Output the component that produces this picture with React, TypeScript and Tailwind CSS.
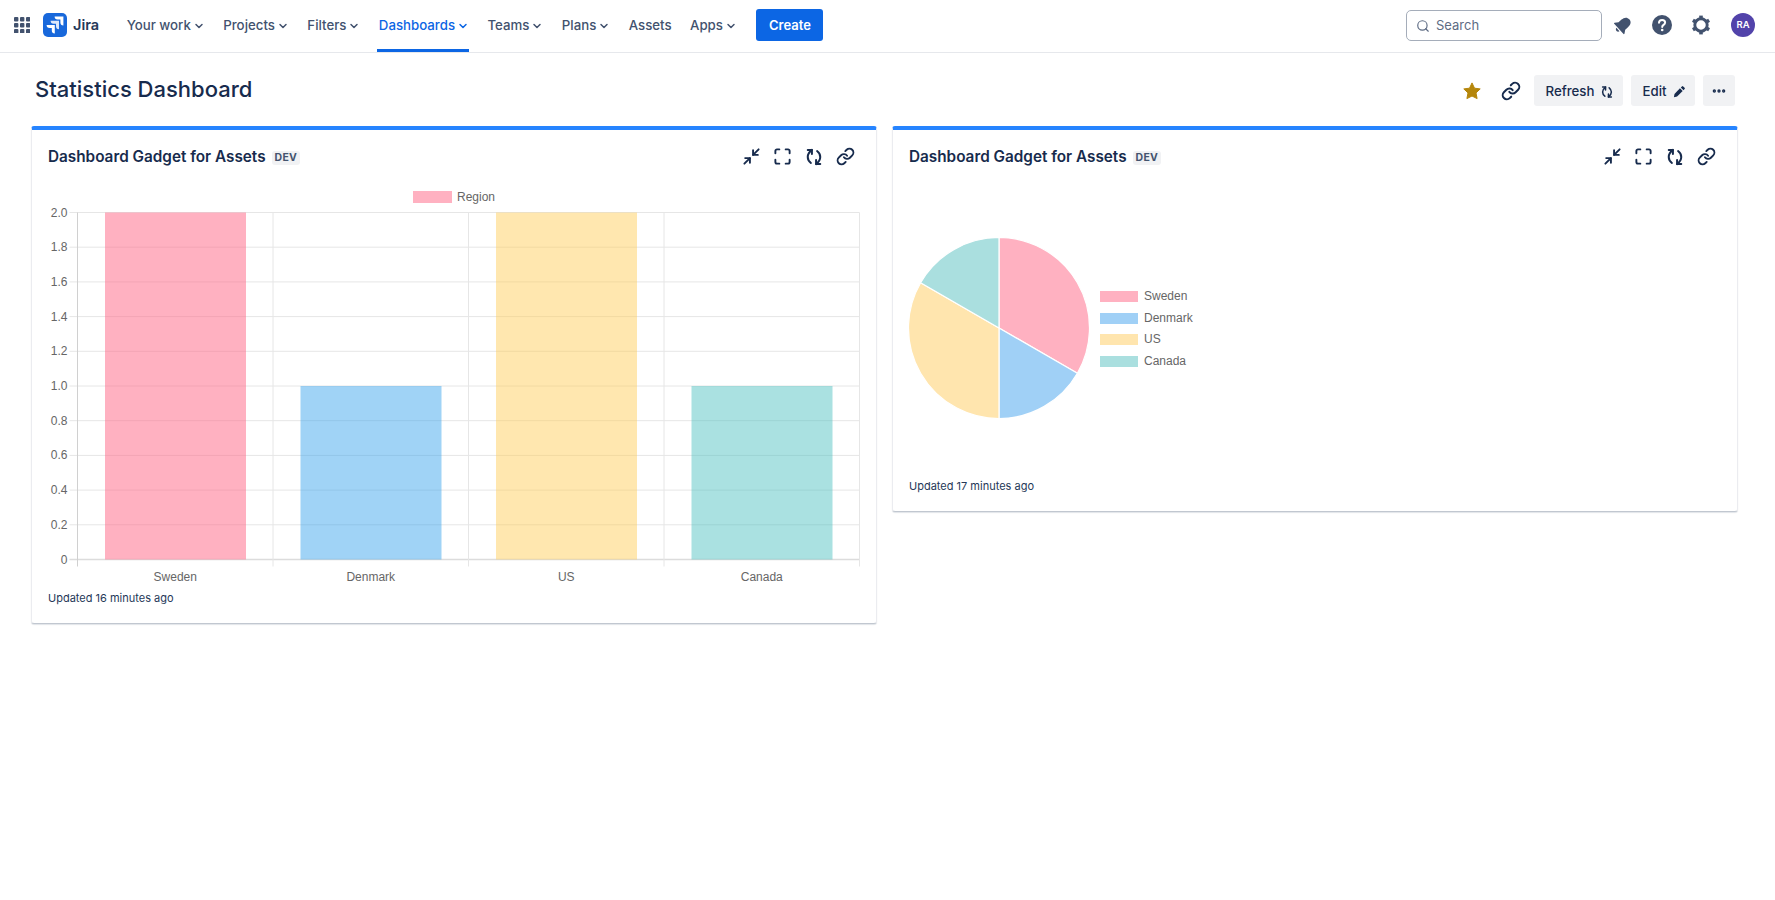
import { ChevronDown, Link, Maximize, Minimize2, MoreHorizontal, Search } from "lucide-react";

const NAV = [
  { label: "Your work", caret: true },
  { label: "Projects", caret: true },
  { label: "Filters", caret: true },
  { label: "Dashboards", caret: true, active: true },
  { label: "Teams", caret: true },
  { label: "Plans", caret: true },
  { label: "Assets", caret: false },
  { label: "Apps", caret: true },
];

const DATA = [
  { name: "Sweden", value: 2, color: "#ffb1c1", bar: "rgba(255,99,132,0.5)" },
  { name: "Denmark", value: 1, color: "#a0d0f6", bar: "rgba(54,162,235,0.47)" },
  { name: "US", value: 2, color: "#ffe5ae", bar: "rgba(255,205,86,0.47)" },
  { name: "Canada", value: 1, color: "#aadfdf", bar: "rgba(75,192,192,0.47)" },
];

function AppGrid() {
  const dots = [];
  for (let r = 0; r < 3; r++) {
    for (let c = 0; c < 3; c++) {
      dots.push(<rect key={`${r}-${c}`} x={c * 6} y={r * 6} width="4.4" height="4.4" rx="1" fill="#42526e" />);
    }
  }
  return (
    <svg width="16.4" height="16.4" viewBox="0 0 16.4 16.4">
      {dots}
    </svg>
  );
}

function JiraLogo() {
  return (
    <svg width="24" height="24" viewBox="0 0 24 24">
      <rect width="24" height="24" rx="5" fill="#1868db" />
      <path d="M11.6 3.6h8.8v8.8a3 3 0 0 1-3-3V6.6h-2.8a3 3 0 0 1-3-3Z" fill="#fff" />
      <path d="M7.6 7.8h8.4v8.4a3 3 0 0 1-3-3v-2.4h-2.4a3 3 0 0 1-3-3Z" fill="#fff" opacity="0.85" />
      <path d="M3.6 12h8.2v8.4a3 3 0 0 1-3-3V15H6.6a3 3 0 0 1-3-3Z" fill="#fff" />
    </svg>
  );
}

function BellIcon() {
  return (
    <svg width="20" height="20" viewBox="0 0 20 20" fill="#42526e">
      <g transform="rotate(48 10 10)">
        <path d="M10 1.5C6.6 1.5 5 4.2 5 7.5v4L2.6 14.7c-.3.5 0 1 .6 1h13.6c.6 0 .9-.5.6-1L15 11.5v-4c0-3.3-1.6-6-5-6Z" />
        <path d="M7.7 16.8h4.6c-.2 1.2-1.1 2-2.3 2s-2.1-.8-2.3-2Z" />
      </g>
    </svg>
  );
}

function HelpIcon() {
  return (
    <svg width="20" height="20" viewBox="0 0 20 20">
      <circle cx="10" cy="10" r="10" fill="#42526e" />
      <path d="M7 7.8c0-1.7 1.3-2.8 3.1-2.8 1.7 0 3 1 3 2.6 0 2.3-2.9 2.3-2.9 4.3" fill="none" stroke="#fff" strokeWidth="2" strokeLinecap="round" />
      <circle cx="10.2" cy="15" r="1.3" fill="#fff" />
    </svg>
  );
}

function GearIcon() {
  return (
    <svg width="20" height="20" viewBox="0 0 20 20" fill="none" stroke="#42526e">
      <circle cx="10" cy="10" r="6.2" strokeWidth="2.9" />
      <g strokeWidth="3.6">
        <path d="M10 .6v2.6" />
        <path d="M10 16.8v2.6" />
        <path d="m1.9 5.3 2.3 1.3" />
        <path d="m15.8 13.4 2.3 1.3" />
        <path d="m1.9 14.7 2.3-1.3" />
        <path d="m15.8 6.6 2.3-1.3" />
      </g>
    </svg>
  );
}

function RefreshIcon({ size = 24, sw = 2.4 }: { size?: number; sw?: number }) {
  return (
    <svg width={size} height={size} viewBox="0 0 24 24" fill="none" stroke="currentColor" strokeWidth={sw} strokeLinecap="round" strokeLinejoin="round">
      <path d="M9.5 3.5C6.2 6 4.5 8.8 4.5 12c0 3 1.3 5.3 3.8 7.2" />
      <path d="M4.5 3.5h5v5" />
      <path d="M14.5 20.5c3.3-2.5 5-5.3 5-8.5 0-3-1.3-5.3-3.8-7.2" />
      <path d="M19.5 20.5h-5v-5" />
    </svg>
  );
}

function PencilIcon() {
  return (
    <svg width="13" height="13" viewBox="0 0 14 14" fill="currentColor">
      <path d="M9.6 1.5a1 1 0 0 1 1.4 0l1.5 1.5a1 1 0 0 1 0 1.4l-1.2 1.2-2.9-2.9 1.2-1.2Z" />
      <path d="M7.5 3.6l2.9 2.9-6 6-3.4.6.6-3.5 5.9-6Z" />
    </svg>
  );
}

function StarIcon() {
  return (
    <svg width="18" height="18" viewBox="0 0 18 18" fill="#b5860b">
      <path d="M9 .9l2.5 5.3 5.7.7-4.2 4 1.1 5.7L9 14l-5.1 2.6L5 10.9.8 6.9l5.7-.7L9 .9Z" stroke="#b5860b" strokeLinejoin="round" />
    </svg>
  );
}

function TopNav() {
  return (
    <header className="flex h-[53px] items-center border-b border-[#e6e8ec] bg-white pb-[2px] pl-[14px] pr-[20px]">
      <AppGrid />
      <div className="ml-[12.6px] flex items-center gap-[6px]">
        <JiraLogo />
        <span className="text-[14.5px] font-semibold text-[#253858]">Jira</span>
      </div>
      <nav className="-mb-[2px] ml-[26px] flex items-center gap-[16.9px] self-stretch">
        {NAV.map((item) => (
          <div
            key={item.label}
            className={`flex h-full items-center gap-[2px] border-b-[3px] pl-[1.5px] pt-[3px] text-[13.25px] font-medium ${
              item.active ? "border-[#0c66e4] text-[#0c66e4]" : "border-transparent text-[#42526e]"
            }`}
          >
            {item.label}
            {item.caret && <ChevronDown size={12} strokeWidth={3} />}
          </div>
        ))}
      </nav>
      <button className="ml-[19.5px] flex h-8 w-[67px] items-center justify-center rounded-[3px] bg-[#0c66e4] pt-[1px] text-[13px] font-semibold text-white">
        Create
      </button>
      <div className="ml-auto flex h-[31px] w-[196px] items-center gap-[6px] rounded-[5px] border border-[#a5adba] px-[9px] pt-[1px] text-[13px] text-[#5e6c84]">
        <Search size={14} strokeWidth={2} />
        Search
      </div>
      <div className="ml-[11px] flex items-center gap-[19px]">
        <BellIcon />
        <HelpIcon />
        <GearIcon />
      </div>
      <div className="ml-[20px] flex h-6 w-6 items-center justify-center rounded-full bg-[#5243aa] text-[9.5px] font-semibold text-white">
        RA
      </div>
    </header>
  );
}

function TitleRow() {
  return (
    <div className="flex h-[73px] items-center pl-[35px] pr-[40px]">
      <h1 className="text-[22px] font-medium text-[#172b4d]">Statistics Dashboard</h1>
      <div className="ml-auto flex items-center pt-[2px] text-[#172b4d]">
        <StarIcon />
        <Link size={20} strokeWidth={2.4} className="ml-[20px]" />
        <button className="ml-[13px] flex h-[31px] w-[89px] items-center justify-center gap-[6px] rounded-[3px] bg-[#f1f2f4] pl-[3px] pt-[2px] text-[13.25px] font-medium">
          Refresh
          <RefreshIcon size={14} sw={2.6} />
        </button>
        <button className="ml-2 flex h-[31px] w-[64px] items-center justify-center gap-[6px] rounded-[3px] bg-[#f1f2f4] pl-[2px] pt-[2px] text-[13.25px] font-medium">
          Edit
          <PencilIcon />
        </button>
        <button className="ml-2 flex h-[31px] w-8 items-center justify-center rounded-[3px] bg-[#f1f2f4]">
          <MoreHorizontal size={16} strokeWidth={3} />
        </button>
      </div>
    </div>
  );
}

function GadgetCard({ updated, children }: { updated: string; children: React.ReactNode }) {
  return (
    <section className="rounded-[3px] border-x border-t-4 border-b border-x-[#ebecf0] border-t-[#2684ff] border-b-[#c1c7d0] bg-white pb-[18px] shadow-[0_1px_1px_rgba(9,30,66,0.12)]">
      <div className="flex h-[53px] items-center pl-[16px] pr-[21px] text-[#172b4d]">
        <h2 className="pt-[2px] text-[15.3px] font-semibold">Dashboard Gadget for Assets</h2>
        <span className="ml-[6px] mt-[3px] rounded-[3px] bg-[#f1f2f4] px-[3px] py-[1px] text-[10.5px] leading-[12px] font-bold tracking-[0.3px] text-[#44546f]">
          DEV
        </span>
        <div className="ml-auto flex items-center gap-[12px]">
          <Minimize2 size={19} strokeWidth={2.4} />
          <Maximize size={19} strokeWidth={2.4} />
          <RefreshIcon size={20} />
          <Link size={19} strokeWidth={2.4} />
        </div>
      </div>
      {children}
      <p className="pl-[16px] text-[11px] leading-[14px] text-[#253858]">{updated}</p>
    </section>
  );
}

function BarChart() {
  const left = 45.5;
  const right = 827.5;
  const top = 29.5;
  const bottom = 376.5;
  const step = (right - left) / 4;
  const ticks = ["2.0", "1.8", "1.6", "1.4", "1.2", "1.0", "0.8", "0.6", "0.4", "0.2", "0"];
  const grid = "#e6e6e6";

  return (
    <svg width="844" height="408" viewBox="0 0 844 408" className="block" style={{ fontFamily: "'Liberation Sans', sans-serif" }}>
      <rect x="381" y="8" width="39" height="12" fill="#ffb1c1" />
      <text x="425" y="18" fontSize="12" fill="#666">Region</text>

      {ticks.map((t, i) => {
        const y = top + (i * (bottom - top)) / 10;
        return (
          <g key={t}>
            <line x1={left - 8} x2={right} y1={y} y2={y} stroke={i === 10 ? "#dcdcdc" : grid} strokeWidth={i === 10 ? 1.5 : 1} />
            <text x={left - 10} y={y + 4} textAnchor="end" fontSize="12" fill="#666">{t}</text>
          </g>
        );
      })}
      {[0, 1, 2, 3, 4].map((i) => (
        <line key={i} x1={left + i * step} x2={left + i * step} y1={top} y2={bottom + 7} stroke={i === 0 ? "#d0d0d0" : grid} />
      ))}
      {DATA.map((d, i) => {
        const h = (d.value / 2) * (bottom - top);
        return (
          <g key={d.name}>
            <rect x={left + i * step + 27.5} y={bottom - h} width="141" height={h} fill={d.bar} />
            <text x={left + i * step + step / 2} y={bottom + 21.5} textAnchor="middle" fontSize="12" fill="#666">{d.name}</text>
          </g>
        );
      })}
    </svg>
  );
}

function pieSlices(cx: number, cy: number, r: number) {
  const total = DATA.reduce((s, d) => s + d.value, 0);
  let start = -Math.PI / 2;
  return DATA.map((d) => {
    const end = start + (d.value / total) * Math.PI * 2;
    const x1 = cx + r * Math.cos(start);
    const y1 = cy + r * Math.sin(start);
    const x2 = cx + r * Math.cos(end);
    const y2 = cy + r * Math.sin(end);
    const large = end - start > Math.PI ? 1 : 0;
    start = end;
    return { ...d, path: `M${cx} ${cy}L${x1} ${y1}A${r} ${r} 0 ${large} 1 ${x2} ${y2}Z` };
  });
}

function PieChart() {
  return (
    <div className="flex h-[296px] items-start pl-[15px]">
      <svg width="182" height="182" viewBox="0 0 182 182" className="mt-[54px]">
        {pieSlices(91, 91, 90.5).map((s) => (
          <path key={s.name} d={s.path} fill={s.color} stroke="#fff" strokeWidth="1.2" />
        ))}
      </svg>
      <ul className="ml-[10px] mt-[107px] flex flex-col gap-[8.7px] font-['Liberation_Sans',sans-serif] text-[12px] leading-[13px] text-[#666]">
        {DATA.map((d) => (
          <li key={d.name} className="flex items-center gap-[6px]">
            <span className="h-[11px] w-[38px]" style={{ background: d.color }} />
            {d.name}
          </li>
        ))}
      </ul>
    </div>
  );
}

export default function App() {
  return (
    <div className="min-h-[900px] bg-white font-['Inter',sans-serif]">
      <TopNav />
      <TitleRow />
      <main className="grid grid-cols-2 items-start gap-[15px] pl-[31px] pr-[37px]">
        <GadgetCard updated="Updated 16 minutes ago">
          <BarChart />
        </GadgetCard>
        <GadgetCard updated="Updated 17 minutes ago">
          <PieChart />
        </GadgetCard>
      </main>
    </div>
  );
}
